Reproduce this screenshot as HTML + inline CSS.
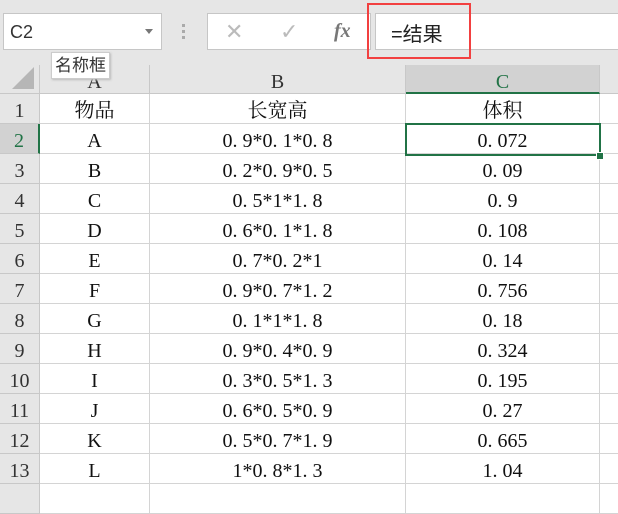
<!DOCTYPE html><html><head><meta charset="utf-8"><style>
body{margin:0;width:618px;height:492px;overflow:hidden;background:#fff;position:relative;font-family:"Liberation Serif","Noto Serif CJK SC",serif}
.tb{position:absolute;left:0;top:0;width:618px;height:65px;background:#e6e6e6}
.box{position:absolute;background:#fff;border:1px solid #c6c6c6;box-sizing:border-box}
.hdr{position:absolute;background:#e6e6e6;color:#333;font-size:20px;text-align:center;box-sizing:border-box;border-right:1px solid #c8c8c8;border-bottom:1px solid #c8c8c8;overflow:hidden}
.c{position:absolute;font-size:20px;text-align:center;color:#111;box-sizing:border-box;border-right:1px solid #d4d4d4;border-bottom:1px solid #d4d4d4;height:30px;line-height:35px;overflow:hidden}
</style></head><body>
<div class="tb"></div>
<div class="box" style="left:3px;top:13px;width:159px;height:37px;font:18px 'Liberation Sans',sans-serif;color:#333;padding:8px 6px">C2<span style="position:absolute;right:8px;top:15px;border:4px solid transparent;border-top:5px solid #777"></span></div>
<div style="position:absolute;left:182px;top:24px;width:3px;height:16px;background:repeating-linear-gradient(#aaa 0 3px,transparent 3px 6px)"></div>
<div class="box" style="left:207px;top:13px;width:164px;height:37px;font:22px 'Liberation Sans',sans-serif;color:#bbb">
<span style="position:absolute;left:17px;top:5px">✕</span><span style="position:absolute;left:72px;top:5px">✓</span><span style="position:absolute;left:126px;top:6px;color:#777;font:italic bold 20px 'Liberation Serif',serif">fx</span></div>
<div class="box" style="left:375px;top:13px;width:250px;height:37px;font:20px 'Liberation Sans','Noto Sans CJK SC',sans-serif;color:#222;padding:4px 15px">=结果</div>
<div style="position:absolute;left:367px;top:3px;width:104px;height:56px;border:2px solid #f24040;box-sizing:border-box"></div>
<div class="hdr" style="left:0;top:65px;width:40px;height:29px"><div style="position:absolute;right:5px;bottom:4px;border-left:22px solid transparent;border-bottom:22px solid #b6b6b6"></div></div>
<div class="hdr" style="left:40px;top:65px;width:110px;height:29px;line-height:34px">A</div>
<div class="hdr" style="left:150px;top:65px;width:256px;height:29px;line-height:34px">B</div>
<div class="hdr" style="left:406px;top:65px;width:194px;height:29px;line-height:34px;background:#d2d2d2;color:#217346;border-bottom:2px solid #217346">C</div>
<div class="hdr" style="left:600px;top:65px;width:18px;height:29px;border-right:0"></div>
<div style="position:absolute;left:51px;top:52px;width:59px;height:27px;background:#fff;border:1px solid #ccc;box-shadow:1px 1px 2px #bbb;font:17px 'Liberation Sans','Noto Sans CJK SC',sans-serif;color:#333;line-height:25px;text-align:center;box-sizing:border-box">名称框</div>
<div id="g"></div>
<script>
var d=[["物品","长宽高","体积"],["A","0. 9*0. 1*0. 8","0. 072"],["B","0. 2*0. 9*0. 5","0. 09"],["C","0. 5*1*1. 8","0. 9"],["D","0. 6*0. 1*1. 8","0. 108"],["E","0. 7*0. 2*1","0. 14"],["F","0. 9*0. 7*1. 2","0. 756"],["G","0. 1*1*1. 8","0. 18"],["H","0. 9*0. 4*0. 9","0. 324"],["I","0. 3*0. 5*1. 3","0. 195"],["J","0. 6*0. 5*0. 9","0. 27"],["K","0. 5*0. 7*1. 9","0. 665"],["L","1*0. 8*1. 3","1. 04"],["","",""]];
var h="";for(var i=0;i<14;i++){var t=94+30*i;var sel=i==1;
h+='<div class="hdr" style="left:0;top:'+t+'px;width:40px;height:30px;line-height:35px;'+(sel?'background:#d2d2d2;color:#217346;border-right:2px solid #217346':'')+'">'+(i<13?i+1:'')+'</div>';
h+='<div class="c" style="left:40px;top:'+t+'px;width:110px">'+d[i][0]+'</div><div class="c" style="left:150px;top:'+t+'px;width:256px">'+d[i][1]+'</div><div class="c" style="left:406px;top:'+t+'px;width:194px">'+d[i][2]+'</div><div class="c" style="left:600px;top:'+t+'px;width:18px;border-right:0"></div>';}
document.getElementById("g").innerHTML=h;
</script>
<div style="position:absolute;left:405px;top:123px;width:196px;height:33px;border:2px solid #217346;box-sizing:border-box"></div>
<div style="position:absolute;left:596px;top:152px;width:6px;height:6px;background:#217346;border:1px solid #fff"></div>
</body></html>
